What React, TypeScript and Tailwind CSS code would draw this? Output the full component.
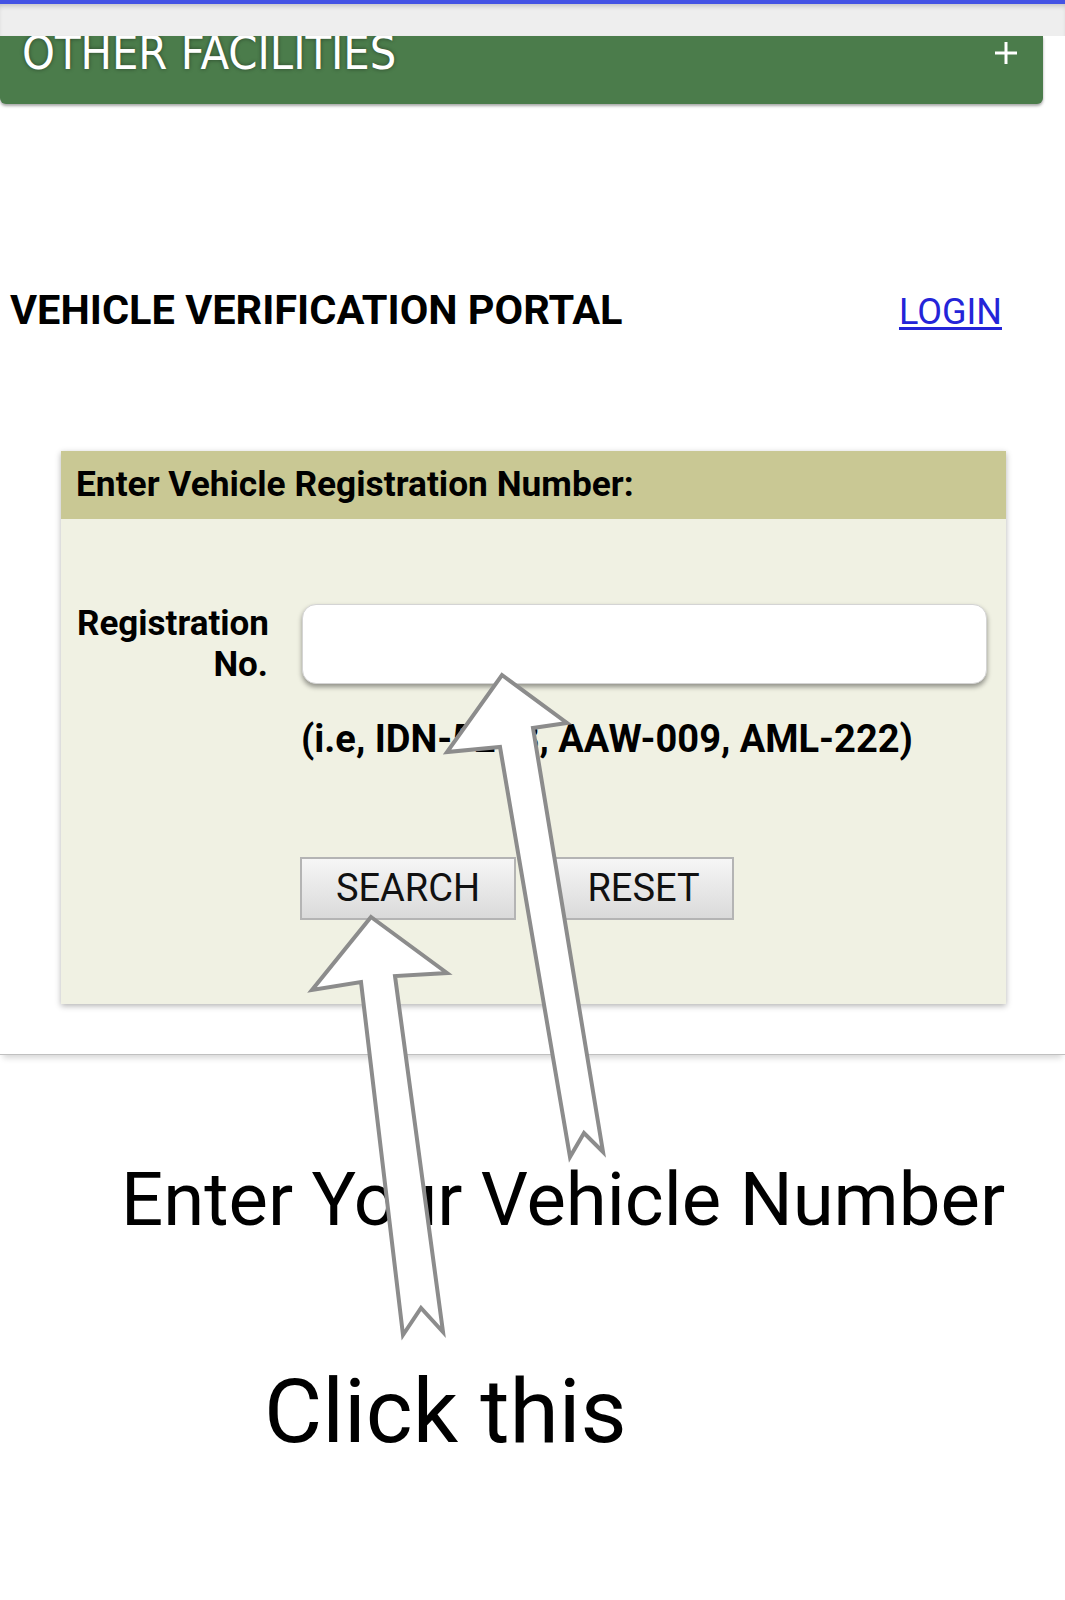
export default function App() {
  return (
    <div className="relative w-[1065px] min-h-[1600px] bg-white font-['Roboto',sans-serif] text-black overflow-hidden">
      {/* top browser strip */}
      <div className="h-[4px] bg-[#4453e4]" />
      <div className="h-[32px] bg-[#eeeeee] shadow-[inset_0_4px_5px_-2px_rgba(0,0,0,0.18)]" />

      {/* collapsed accordion */}
      <div className="w-[1043px] h-[68px] overflow-hidden bg-[#4b7c4b] rounded-b-[6px] shadow-[0_2px_3px_rgba(0,0,0,0.35)] flex justify-between">
        <div className="ml-[22px] mt-[-6px] text-[46.5px] leading-none text-white font-['DejaVu_Sans_Condensed','DejaVu_Sans',sans-serif] [font-stretch:condensed] [text-shadow:0_0_4px_rgba(0,0,0,0.45)]">
          OTHER FACILITIES
        </div>
        <svg className="mt-[5px] mr-[25px]" width="24" height="24" viewBox="0 0 24 24">
          <path d="M12 1v22M1 12h22" stroke="white" strokeWidth="3" />
        </svg>
      </div>

      {/* portal section */}
      <div className="mt-[185px] pb-[50px] border-b border-[#c0c0c0] shadow-[0_6px_6px_-3px_rgba(0,0,0,0.16)]">
        <div className="flex items-baseline justify-between pl-[10px] pr-[63px]">
          <h1 className="text-[41.5px] leading-none font-bold">VEHICLE VERIFICATION PORTAL</h1>
          <a href="#" className="text-[36px] leading-none text-[#2424d8] underline underline-offset-[3px]">
            LOGIN
          </a>
        </div>

        <div className="mt-[120px] ml-[61px] w-[945px] bg-[#f0f1e3] shadow-[0_2px_6px_rgba(0,0,0,0.3)]">
          <div className="h-[68px] bg-[#c9c894] flex items-center pl-[15px]">
            <span className="text-[35.3px] font-bold leading-none">Enter Vehicle Registration Number:</span>
          </div>

          <div className="pt-[84px] pb-[84px] pr-[19px]">
            <div className="flex items-center pl-[16px]">
              <label className="w-[191px] shrink-0 text-right text-[35px] leading-[41px] font-bold whitespace-nowrap">
                Registration
                <br />
                No.
              </label>
              <input
                type="text"
                className="ml-[34px] flex-1 h-[80px] rounded-[14px] bg-white border border-[#d4d4d4] shadow-[0_3px_5px_rgba(0,0,0,0.4)] outline-none px-4 text-[36px]"
              />
            </div>

            <p className="mt-[35px] ml-[240px] text-[38px] leading-none font-bold whitespace-nowrap">
              (i.e, IDN-5248, AAW-009, AML-222)
            </p>

            <div className="mt-[99px] ml-[239px] flex gap-[37px]">
              <button className="w-[216px] h-[63px] border-2 border-[#b4b4b4] bg-linear-to-b from-[#f6f6f6] to-[#dadada] text-[38px] leading-none text-[#111]">
                SEARCH
              </button>
              <button className="w-[181px] h-[63px] border-2 border-[#b4b4b4] bg-linear-to-b from-[#f6f6f6] to-[#dadada] text-[38px] leading-none text-[#111]">
                RESET
              </button>
            </div>
          </div>
        </div>
      </div>

      {/* annotations */}
      <div className="mt-[108px] pl-[121px] text-[74.3px] leading-none whitespace-nowrap">Enter Your Vehicle Number</div>
      <div className="mt-[130px] pl-[264px] text-[89.5px] leading-none whitespace-nowrap">Click this</div>

      <svg className="absolute left-0 top-0 pointer-events-none" width="1065" height="1600" viewBox="0 0 1065 1600">
        <polygon
          points="371,917 447,973 395,976 443,1332 421,1308 403,1335 361,982 312,990"
          fill="white"
          stroke="#8c8c8c"
          strokeWidth="4"
        />
        <polygon
          points="502,675 567,723 533,728 603,1152 584,1133 570,1157 500,747 447,752"
          fill="white"
          stroke="#8c8c8c"
          strokeWidth="4"
        />
      </svg>
    </div>
  );
}
